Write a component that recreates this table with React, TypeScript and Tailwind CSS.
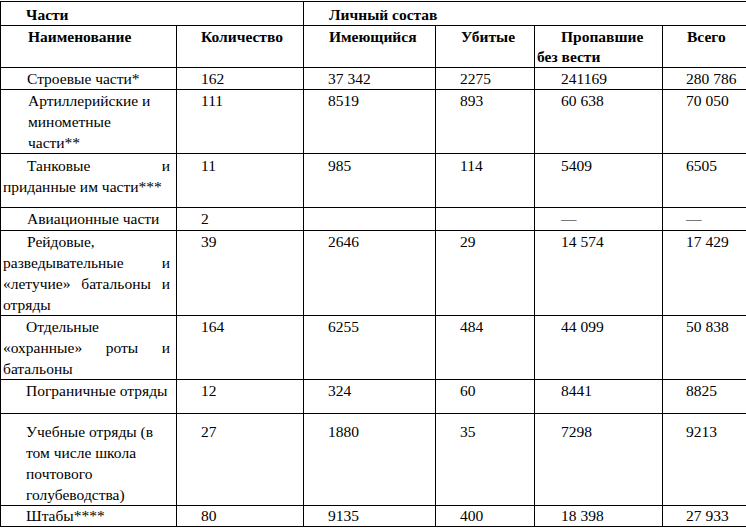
type Line = { t: string; i?: number; j?: boolean }

type Row = {
  name: Line[]
  values: string[]
  h: number
  pt?: number
  lh?: string
}

const ROWS: Row[] = [
  { name: [{ t: 'Строевые части*', i: 24 }], values: ['162', '37 342', '2275', '241169', '280 786'], h: 22 },
  {
    name: [
      { t: 'Артиллерийские и', i: 25 },
      { t: 'минометные', i: 25 },
      { t: 'части**', i: 25 },
    ],
    values: ['111', '8519', '893', '60 638', '70 050'],
    h: 64,
  },
  {
    name: [
      { t: 'Танковые и', i: 24, j: true },
      { t: 'приданные им части***' },
    ],
    values: ['11', '985', '114', '5409', '6505'],
    h: 54,
    pt: 1,
  },
  { name: [{ t: 'Авиационные части', i: 24 }], values: ['2', '', '', '—', '—'], h: 23 },
  {
    name: [
      { t: 'Рейдовые,', i: 24 },
      { t: 'разведывательные и', j: true },
      { t: '«летучие» батальоны и', j: true },
      { t: 'отряды' },
    ],
    values: ['39', '2646', '29', '14 574', '17 429'],
    h: 85,
  },
  {
    name: [
      { t: 'Отдельные', i: 23 },
      { t: '«охранные» роты и', j: true },
      { t: 'батальоны' },
    ],
    values: ['164', '6255', '484', '44 099', '50 838'],
    h: 64,
  },
  { name: [{ t: 'Пограничные отряды', i: 23 }], values: ['12', '324', '60', '8441', '8825'], h: 34 },
  {
    name: [
      { t: 'Учебные отряды (в', i: 23 },
      { t: 'том числе школа', i: 23 },
      { t: 'почтового', i: 23 },
      { t: 'голубеводства)', i: 23 },
    ],
    values: ['27', '1880', '35', '7298', '9213'],
    h: 92,
    pt: 7,
  },
  { name: [{ t: 'Штабы****', i: 23 }], values: ['80', '9135', '400', '18 398', '27 933'], h: 21, lh: 'leading-[20px]' },
]

const cell = 'border border-black align-top pl-[2px] pr-[6px] text-left'

export default function App() {
  return (
    <div className="w-[746px] h-[528px] bg-white pt-px text-black text-[15.5px] leading-[21px] font-[Liberation_Serif,Times_New_Roman,serif]">
      <table className="w-[746px] table-fixed border-collapse">
        <colgroup>
          <col className="w-[176px]" />
          <col className="w-[127px]" />
          <col className="w-[132px]" />
          <col className="w-[99px]" />
          <col className="w-[128px]" />
          <col className="w-[84px]" />
        </colgroup>
        <thead className="font-bold">
          <tr className="h-[24px]">
            <th colSpan={2} className={`${cell} pt-[2px] indent-[23px]`}>Части</th>
            <th colSpan={4} className={`${cell} pt-[2px] indent-[23px]`}>Личный состав</th>
          </tr>
          <tr className="h-[42px] leading-[20px]">
            <th className={`${cell} pt-px indent-[25px]`}>Наименование</th>
            <th className={`${cell} pt-px indent-[22px]`}>Количество</th>
            <th className={`${cell} pt-px indent-[23px]`}>Имеющийся</th>
            <th className={`${cell} pt-px indent-[23px]`}>Убитые</th>
            <th className={`${cell} pt-px indent-[24px]`}>Пропавшие без вести</th>
            <th className={`${cell} pt-px indent-[22px]`}>Всего</th>
          </tr>
        </thead>
        <tbody>
          {ROWS.map((row, r) => (
            <tr key={r} className={row.lh ?? ''} style={{ height: row.h }}>
              <td className={cell} style={{ paddingTop: row.pt ?? 0 }}>
                {row.name.map((l, k) => (
                  <div
                    key={k}
                    className={l.j ? 'text-justify [text-align-last:justify]' : ''}
                    style={{ paddingLeft: l.i ?? 0 }}
                  >
                    {l.t}
                  </div>
                ))}
              </td>
              {row.values.map((v, c) => (
                <td
                  key={c}
                  className={`${cell} ${c === 3 ? 'indent-[24px]' : c === 4 ? 'indent-[21px]' : 'indent-[22px]'}`}
                  style={{ paddingTop: row.pt ?? 0 }}
                >
                  {v}
                </td>
              ))}
            </tr>
          ))}
        </tbody>
      </table>
    </div>
  )
}
